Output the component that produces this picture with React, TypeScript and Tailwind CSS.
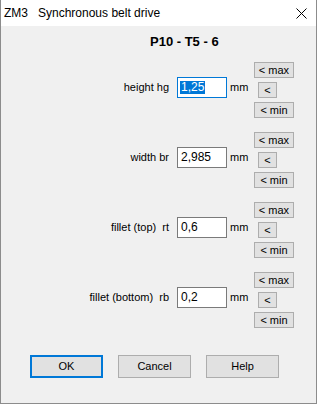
import React from "react";

const font = { fontFamily: '"Liberation Sans", Arial, sans-serif' };

function SmallBtn({ label, w }: { label: string; w: string }) {
  return (
    <div
      className={`${w} h-[16px] bg-[#e1e1e1] border border-[#adadad] flex items-center justify-center text-[11px] leading-none text-black`}
    >
      {label}
    </div>
  );
}

function Row({
  label,
  value,
  focused,
}: {
  label: string;
  value: string;
  focused?: boolean;
}) {
  return (
    <div className="flex items-start">
      <div className="flex items-center h-[21px] mt-[15px]">
        <div className="w-[168px] text-right text-[11px] whitespace-pre text-black">
          {label}
        </div>
        <div
          className={`ml-[8px] w-[50px] h-[21px] bg-white border ${
            focused ? "border-[#0078d7]" : "border-[#7a7a7a]"
          } flex items-center pl-[2px] text-[12px] leading-[13px] text-black`}
        >
          {focused ? (
            <span className="bg-[#0078d7] text-white pr-[1px] pl-[1px]">{value}</span>
          ) : (
            <span className="pl-[1px]">{value}</span>
          )}
        </div>
        <div className="w-[27px] pl-[3px] text-[11px] text-black">mm</div>
      </div>
      <div className="flex flex-col gap-[4px] items-start">
        <SmallBtn label="< max" w="w-[40px]" />
        <div className="pl-[4px]">
          <SmallBtn label="<" w="w-[19px]" />
        </div>
        <SmallBtn label="< min" w="w-[40px]" />
      </div>
    </div>
  );
}

function BigBtn({ label, def }: { label: string; def?: boolean }) {
  return (
    <div
      className={`w-[73px] h-[23px] bg-[#e1e1e1] ${
        def ? "border-2 border-[#0078d7]" : "border border-[#adadad]"
      } flex items-center justify-center text-[11px] text-black`}
    >
      {label}
    </div>
  );
}

export default function App() {
  return (
    <div
      className="w-[317px] h-[404px] bg-[#f0f0f0] border-l border-r border-b border-[#8c8c8c] flex flex-col overflow-hidden"
      style={font}
    >
      <div className="h-[26px] bg-white flex items-center pl-[3px] pr-[9px] text-[12px] text-black shrink-0">
        <span className="whitespace-pre">ZM3   Synchronous belt drive</span>
        <svg
          className="ml-auto"
          width="11"
          height="11"
          viewBox="0 0 11 11"
          fill="none"
          stroke="#000"
          strokeWidth="1"
        >
          <path d="M0.5 0.5 L10.5 10.5 M10.5 0.5 L0.5 10.5" />
        </svg>
      </div>
      <div className="mt-[8px] pl-[149px] text-[13px] leading-[15px] font-bold text-black">
        P10 - T5 - 6
      </div>
      <div className="mt-[13px] flex flex-col gap-[14px]">
        <Row label="height hg" value="1,25" focused />
        <Row label="width br" value="2,985" />
        <Row label="fillet (top)  rt" value="0,6" />
        <Row label="fillet (bottom)  rb" value="0,2" />
      </div>
      <div className="mt-[27px] pl-[29px] flex gap-[15px]">
        <BigBtn label="OK" def />
        <BigBtn label="Cancel" />
        <BigBtn label="Help" />
      </div>
    </div>
  );
}
